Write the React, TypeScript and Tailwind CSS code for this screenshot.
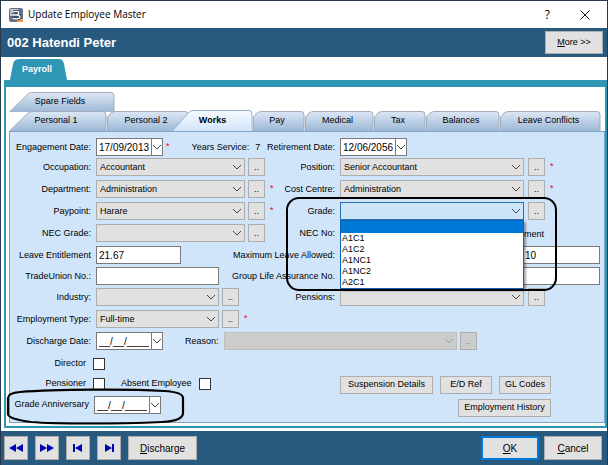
import React from "react";

const field = "h-[18px] border border-[#7a7a7a] bg-white px-[2px] text-[10px] leading-4 text-black outline-none";
const pushButton = "border border-[#adadad] bg-[#e1e1e1] text-center text-black";

function Chevron({ className = "" }: { className?: string }) {
  return (
    <svg viewBox="0 0 10 6" className={`pointer-events-none h-[6px] w-[10px] ${className}`} fill="none" stroke="currentColor">
      <path d="M1 1l4 4 4-4" />
    </svg>
  );
}

function Tab({ label, w, slope = 7, active = false, className = "" }: { label: string; w: number; slope?: number; active?: boolean; className?: string }) {
  const h = active ? 21 : 20;
  const shape = `M0.5 ${h} ${slope > 10 ? "" : "V6"} L${slope - 3} 2 Q${slope - 1} 0.5 ${slope + 2} 0.5 H${w - 4} Q${w - 1} 0.5 ${w - 1} 4 V${h}`;
  return (
    <button role="tab" aria-selected={active} className={`relative shrink-0 ${active ? "h-[21px] font-bold" : "h-5"} ${className}`}>
      <svg viewBox={`0 0 ${w} ${h}`} className="block h-full" width={w} height={h} aria-hidden="true">
        <defs>
          <linearGradient id={label.replace(" ", "")} x1="0" y1="0" x2="0" y2="1">
            <stop offset="0" stopColor={active ? "#f6faff" : "#dce7f5"} />
            <stop offset="1" stopColor={active ? "#d2e5fa" : "#9db8d5"} />
          </linearGradient>
        </defs>
        <path d={shape} fill={`url(#${label.replace(" ", "")})`} stroke={active ? "#8fb2d4" : "#a3abb8"} />
      </svg>
      <span className={`absolute inset-y-0 flex items-center justify-center whitespace-nowrap ${active ? "inset-x-0" : "right-1 left-0"}`}>{label}</span>
    </button>
  );
}

function DateBox({ id, value }: { id: string; value: string }) {
  return (
    <div className="flex w-[67px] shrink-0">
      <input id={id} defaultValue={value} className="h-[18px] w-[55px] border border-r-0 border-[#7a7a7a] bg-white px-[2px] text-[10px] leading-4 text-black outline-none" />
      <button aria-label="Open calendar" className="flex h-[18px] w-3 items-center justify-center border border-[#7a7a7a] bg-white text-[#444]">
        <Chevron />
      </button>
    </div>
  );
}

function Combo({ id, value = "", className, tone = "border-[#adadad] bg-[#e1e1e1]", disabled = false }: { id: string; value?: string; className: string; tone?: string; disabled?: boolean }) {
  return (
    <div className={`relative h-[18px] shrink-0 text-[#444] ${className}`}>
      <select id={id} disabled={disabled} className={`block h-full w-full appearance-none border px-[3px] text-[9px] leading-4 text-black outline-none ${tone}`}>
        <option>{value}</option>
      </select>
      <Chevron className={`absolute top-[6px] right-[3px] ${disabled ? "text-[#a0a0a0]" : ""}`} />
    </div>
  );
}

function More({ of, className = "ml-[3px]", tone = "" }: { of: string; className?: string; tone?: string }) {
  return (
    <button aria-label={`Browse ${of}`} className={`${pushButton} h-[18px] w-[17px] shrink-0 leading-4 ${className} ${tone}`}>
      ..
    </button>
  );
}

const Star = ({ className = "ml-[5px]" }: { className?: string }) => <span className={`leading-4 text-red-600 ${className}`}>*</span>;

function Row({ label, id, left, rightLabel, rightId, right, className = "h-[22px]" }: {
  label: string; id: string; left: React.ReactNode; rightLabel?: string; rightId?: string; right?: React.ReactNode; className?: string;
}) {
  return (
    <div className={`flex ${className}`}>
      <label htmlFor={id} className="w-[86px] shrink-0 pr-[5px] text-right leading-[18px]">{label}</label>
      {left}
      {right && (
        <>
          <label htmlFor={rightId} className="min-w-0 flex-1 pr-[5px] text-right leading-[18px]">{rightLabel}</label>
          <div className="flex w-[264px] shrink-0">{right}</div>
        </>
      )}
    </div>
  );
}

function NavButton({ label, children }: { label: string; children: React.ReactNode }) {
  return (
    <button aria-label={label} className={`${pushButton} flex size-6 items-center justify-center`}>
      <svg viewBox="0 0 16 10" className="h-[10px] w-4" fill="#0000b4">{children}</svg>
    </button>
  );
}

const grades = ["A1C1", "A1C2", "A1NC1", "A1NC2", "A2C1"];

export default function App() {
  return (
    <div className="bg-[#2a394a] px-px pt-px font-['Liberation_Sans',Arial,sans-serif] text-[9px] whitespace-nowrap text-black">
      <main className="bg-white">
        <header className="flex h-[27px] items-center pr-[17px] pl-2">
          <svg viewBox="0 0 14 14" className="size-[14px]" aria-hidden="true">
            <rect width="14" height="14" rx="2" fill="#657486" />
            <path d="M1 1h9L3 8H1z" fill="#b9c3ce" />
            <path d="M9 11h5v3H7z" fill="#e69a53" />
            <path d="M2 7h3M4 3.500h5Q11 4.500 8.500 7Q12 8 10.500 10Q9 11.500 3.500 10.500M5 7h4" fill="none" stroke="#1e3148" strokeWidth="3" />
            <path d="M2 7h3M4 3.500h5Q11 4.500 8.500 7Q12 8 10.500 10Q9 11.500 3.500 10.500M5 7h4" fill="none" stroke="#fff" strokeWidth="1.500" />
          </svg>
          <h1 className="ml-[5px] flex-1 font-['Open_Sans',sans-serif] text-[10px]">Update Employee Master</h1>
          <button aria-label="Help" className="mr-[30px] font-['Open_Sans',sans-serif] text-[12px]">?</button>
          <button aria-label="Close">
            <svg viewBox="0 0 10 10" className="size-[10px]" stroke="#111" fill="none"><path d="M.5.5l9 9M9.500.5l-9 9" /></svg>
          </button>
        </header>

        <div className="flex h-[29px] items-center justify-between bg-[#285a7f] pr-1 pl-[6px]">
          <h2 className="text-[13px] font-bold text-white">002 Hatendi Peter</h2>
          <button className={`${pushButton} h-[23px] w-[58px]`}><u>M</u>ore &gt;&gt;</button>
        </div>

        <div className="pt-[2px] pb-[3px] pl-[3px]">
          <button role="tab" aria-selected="true" className="relative ml-[6px] block h-[21px] w-[57px] text-white">
            <svg viewBox="0 0 57 21" className="absolute inset-0 h-full w-full" aria-hidden="true">
              <path d="M0 21L3 5Q4 0 10 0H49Q53 0 54 5L57 21z" fill="#2f96b4" />
            </svg>
            <span className="relative pr-[3px] font-bold">Payroll</span>
          </button>

          <section className="border-x-2 border-t-[7px] border-b-2 border-[#2f96b4] pt-[5px] pb-[3px] pl-[3px]">
            <div role="tablist">
              <Tab label="Spare Fields" w={106} slope={22} className="block" />
              <div className="-mt-[2px] flex items-end">
                <Tab label="Personal 1" w={98} slope={22} />
                <Tab label="Personal 2" w={82} />
                <Tab label="Works" w={81} slope={20} active className="-ml-[17px]" />
                <Tab label="Pay" w={52} />
                <Tab label="Medical" w={69} />
                <Tab label="Tax" w={52} />
                <Tab label="Balances" w={74} />
                <Tab label="Leave Conflicts" w={101} />
              </div>
            </div>

            <div className="relative border border-[#7fa6c8] bg-[#d1e5fa] pt-[6px] pb-[5px]">
              <Row className="h-5" label="Engagement Date:" id="engaged"
                left={<><DateBox id="engaged" value="17/09/2013" /><Star className="ml-[3px]" />
                  <span className="ml-[22px] leading-[18px]">Years Service:</span><output className="ml-[6px] leading-[18px]">7</output></>}
                rightLabel="Retirement Date:" rightId="retire" right={<DateBox id="retire" value="12/06/2056" />} />
              <Row label="Occupation:" id="occ" left={<><Combo id="occ" value="Accountant" className="w-[149px]" /><More of="occupations" /></>}
                rightLabel="Position:" rightId="pos" right={<><Combo id="pos" value="Senior Accountant" className="w-[184px]" /><More of="positions" className="ml-1" /><Star /></>} />
              <Row label="Department:" id="dept" left={<><Combo id="dept" value="Administration" className="w-[149px]" /><More of="departments" /><Star /></>}
                rightLabel="Cost Centre:" rightId="cost" right={<><Combo id="cost" value="Administration" className="w-[184px]" /><More of="cost centres" className="ml-1" /><Star /></>} />
              <Row label="Paypoint:" id="paypoint" left={<><Combo id="paypoint" value="Harare" className="w-[149px]" /><More of="paypoints" /><Star /></>}
                rightLabel="Grade:" rightId="grade" right={
                  <div className="relative flex">
                    <Combo id="grade" className="w-[184px]" tone="border-[#2b6fae] bg-[#cce4f7]" />
                    <More of="grades" className="ml-1" />
                    <ul role="listbox" aria-label="Grade" className="absolute top-[18px] left-0 z-10 w-[184px] border border-[#0a63b5] bg-white leading-[11px] text-black shadow-[2px_2px_2px_rgba(0,0,0,0.35)]">
                      <li role="option" aria-selected="true" className="h-3 bg-[#0078d7]" />
                      {grades.map((g) => <li key={g} role="option" aria-selected="false" className="px-px">{g}</li>)}
                    </ul>
                    <svg viewBox="0 0 272 94" className="pointer-events-none absolute -top-[5px] -left-[54px] z-20 h-[94px] w-[272px] max-w-none" fill="none" stroke="#000" strokeWidth="2" aria-hidden="true">
                      <rect x="1" y="1" width="269" height="92" rx="12" />
                    </svg>
                  </div>} />
              <Row label="NEC Grade:" id="necgrade" left={<><Combo id="necgrade" className="w-[149px]" /><More of="NEC grades" /></>}
                rightLabel="NEC No:" rightId="necno" right={<><input id="necno" className={`${field} w-[120px]`} />
                  <span className="ml-auto pr-[60px] leading-5">ement</span></>} />
              <Row className="h-[21px]" label="Leave Entitlement" id="leave" left={<input id="leave" defaultValue="21.67" className={`${field} w-[85px]`} />}
                rightLabel="Maximum Leave Allowed:" rightId="maxleave" right={<div className="flex w-[260px] justify-end"><input id="maxleave" defaultValue="10" className={`${field} w-[78px]`} /></div>} />
              <Row className="h-[21px]" label="TradeUnion No.:" id="union" left={<input id="union" className={`${field} w-[123px]`} />}
                rightLabel="Group Life Assurance No." rightId="life" right={<input id="life" className={`${field} w-[260px]`} />} />
              <Row label="Industry:" id="industry" left={<><Combo id="industry" className="w-[123px]" /><More of="industries" /></>}
                rightLabel="Pensions:" rightId="pensions" right={<><Combo id="pensions" className="w-[184px]" /><More of="pensions" className="ml-1" /></>} />
              <Row label="Employment Type:" id="emptype" left={<><Combo id="emptype" value="Full-time" className="w-[123px]" /><More of="employment types" /><Star /></>} />
              <Row label="Discharge Date:" id="discharge"
                left={<><DateBox id="discharge" value="__/__/____" />
                  <label htmlFor="reason" className="ml-[22px] w-[39px] leading-[18px]">Reason:</label>
                  <Combo id="reason" disabled className="w-[233px]" tone="border-[#bfbfbf] bg-[#cccccc]" />
                  <More of="reasons" tone="bg-[#cccccc]! text-[#838383]!" /></>} />

              <div className="flex justify-between">
                <div>
                  <div className="flex h-5 items-center">
                    <label htmlFor="director" className="w-[76px] text-right">Director</label>
                    <input id="director" type="checkbox" className="ml-[7px] size-3 appearance-none border border-[#333] bg-white" />
                  </div>
                  <div className="flex h-5 items-center">
                    <label htmlFor="pensioner" className="w-[76px] text-right">Pensioner</label>
                    <input id="pensioner" type="checkbox" className="ml-[7px] size-3 appearance-none border border-[#333] bg-white" />
                    <label htmlFor="absent" className="ml-4">Absent Employee</label>
                    <input id="absent" type="checkbox" className="ml-[7px] size-3 appearance-none border border-[#333] bg-white" />
                  </div>
                  <div className="relative flex h-[22px] items-center">
                    <label htmlFor="anniversary" className="w-[84px] pr-[5px] text-right">Grade Anniversary</label>
                    <DateBox id="anniversary" value="__/__/____" />
                    <svg viewBox="0 0 180 37" className="pointer-events-none absolute -top-[6px] -left-[4px] h-[37px] w-[180px] max-w-none" fill="none" stroke="#000" strokeWidth="2.200" aria-hidden="true">
                      <path d="M14 4C50 1 125 1 158 3Q177 4 177 10V25Q177 33 156 34C110 36 50 36 25 34Q2 31 2 26V10Q2 5 14 4z" />
                    </svg>
                  </div>
                </div>
                <div className="mt-[22px] mr-[53px] flex flex-col items-end gap-[5px]">
                  <div className="flex gap-[7px]">
                    <button className={`${pushButton} h-[18px] w-[93px]`}>Suspension Details</button>
                    <button className={`${pushButton} h-[18px] w-[52px]`}>E/D Ref</button>
                    <button className={`${pushButton} h-[18px] w-[52px]`}>GL Codes</button>
                  </div>
                  <button className={`${pushButton} h-[18px] w-[93px]`}>Employment History</button>
                </div>
              </div>
            </div>
          </section>
        </div>

        <footer className="flex h-[34px] items-center bg-[#285a7f] pr-[5px] pl-[3px]">
          <div className="flex items-center gap-[7px]">
            <NavButton label="Rewind"><path d="M1 5l7-4v8zM8 5l7-4v8z" /></NavButton>
            <NavButton label="Forward"><path d="M8 5L1 1v8zM15 5L8 1v8z" /></NavButton>
            <NavButton label="First"><path d="M3 1h2v8H3zM5 5l7-4v8z" /></NavButton>
            <NavButton label="Last"><path d="M11 1h2v8h-2zM11 5L4 1v8z" /></NavButton>
            <button className={`${pushButton} h-6 w-[69px] text-[10px]`}><u>D</u>ischarge</button>
          </div>
          <div className="ml-auto flex gap-[5px]">
            <button className="h-6 w-[58px] border-2 border-[#0078d7] bg-[#e1e1e1] text-[10px]"><u>O</u>K</button>
            <button className={`${pushButton} h-6 w-[58px] text-[10px]`}><u>C</u>ancel</button>
          </div>
        </footer>
      </main>
    </div>
  );
}
